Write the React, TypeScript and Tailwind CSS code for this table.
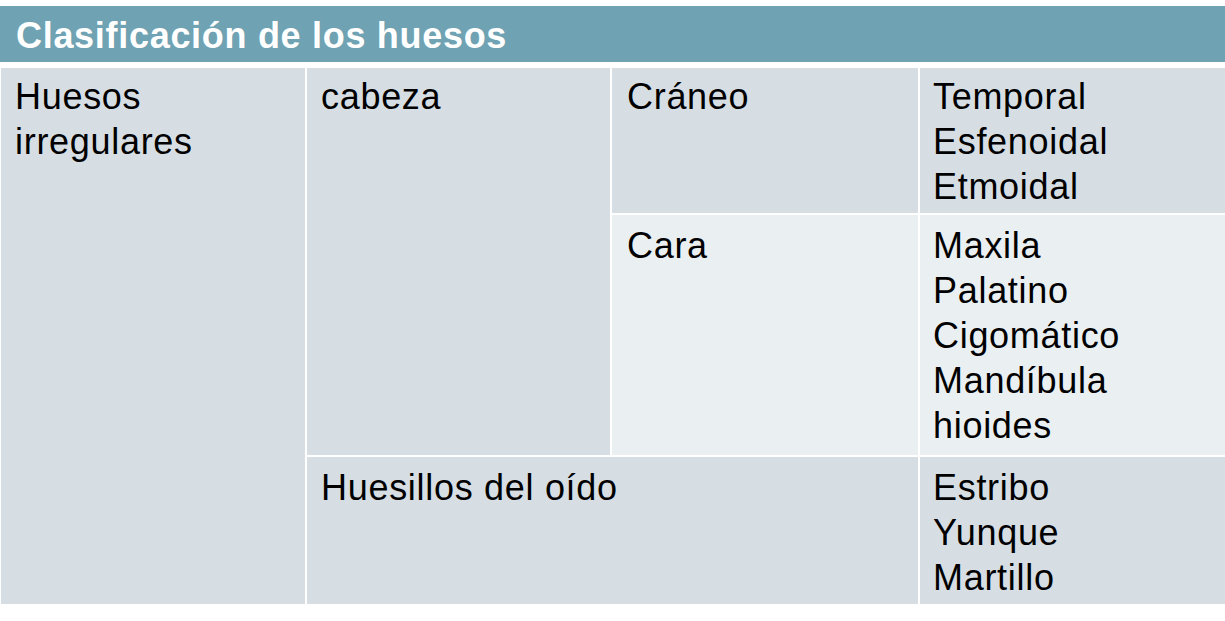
import React from 'react';

const dark = 'bg-[#d6dee4]';
const light = 'bg-[#eaeff2]';

const Lines = ({ items }: { items: string[] }) => (
  <>
    {items.map((t) => (
      <div key={t}>{t}</div>
    ))}
  </>
);

const App = () => {
  return (
    <div className="min-h-screen w-[1225px] bg-white pt-[6px] font-['Liberation_Sans',Arial,sans-serif] text-black">
      {/* Title bar */}
      <div className="flex h-[56px] items-center bg-[#6fa2b2] pl-[16px] pt-[4px] text-[36px] font-bold tracking-[0.7px] text-white">
        Clasificación de los huesos
      </div>

      {/* Table body */}
      <div className="mt-[6px] grid grid-cols-[304px_303px_306px_305px] grid-rows-[145px_240px_147px] gap-[2px] pl-px text-[36px] leading-[45px] tracking-[0.7px]">
        <div className={`${dark} row-span-3 px-[14px] pt-[6px]`}>
          Huesos
          <br />
          irregulares
        </div>
        <div className={`${dark} row-span-2 px-[14px] pt-[6px]`}>cabeza</div>
        <div className={`${dark} px-[15px] pt-[6px]`}>Cráneo</div>
        <div className={`${dark} px-[13px] pt-[6px]`}>
          <Lines items={['Temporal', 'Esfenoidal', 'Etmoidal']} />
        </div>

        <div className={`${light} px-[15px] pt-[8px]`}>Cara</div>
        <div className={`${light} px-[13px] pt-[8px]`}>
          <Lines items={['Maxila', 'Palatino', 'Cigomático', 'Mandíbula', 'hioides']} />
        </div>

        <div className={`${dark} col-span-2 px-[14px] pt-[8px]`}>Huesillos del oído</div>
        <div className={`${dark} px-[13px] pt-[8px]`}>
          <Lines items={['Estribo', 'Yunque', 'Martillo']} />
        </div>
      </div>
    </div>
  );
};

export default App;
